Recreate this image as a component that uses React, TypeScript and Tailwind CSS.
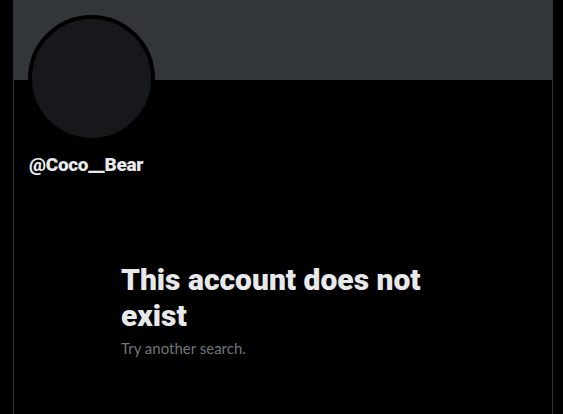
export default function App() {
  return (
    <div className="flex h-[414px] w-[563px] overflow-hidden bg-black" style={{ fontFamily: 'Roboto, "Open Sans", sans-serif' }}>
      <div className="w-[13px] shrink-0" />
      <div className="flex w-[540px] shrink-0 flex-col border-x border-[#2f3336]">
        <div className="h-[80px] bg-[#333639]" />
        <div className="-mt-[65px] ml-[14px] h-[127px] w-[127px] rounded-full border-4 border-black bg-[#16181c]" />
        <div className="ml-[15px] mt-[11px] text-[19px] font-black leading-[24px] tracking-[-0.3px] text-[#e7e9ea]">@Coco__Bear</div>
        <div className="ml-[107px] mt-[85px] w-[336px]">
          <div className="text-[30px] font-black leading-[36px] text-[#e7e9ea]">This account does not exist</div>
          <div className="mt-[4px] text-[15px] leading-[20px] text-[#71767b]" style={{ fontFamily: 'Lato, Roboto, sans-serif' }}>Try another search.</div>
        </div>
      </div>
    </div>
  );
}
